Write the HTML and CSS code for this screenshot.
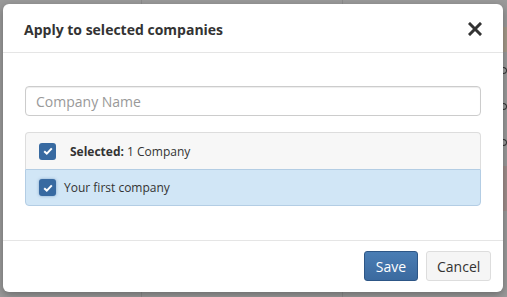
FILE: index.html
```html
<!DOCTYPE html>
<html>
<head>
<meta charset="utf-8">
<link rel="stylesheet" href="styles.css">
</head>
<body>
<div class="page">
  <div class="col col-a"></div>
  <div class="col col-b"></div>
  <div class="col col-c">
    <div class="band band-tan"></div>
    <div class="frag"><span class="arc"></span></div>
    <div class="frag"><span class="arc"></span></div>
    <div class="frag"><span class="arc"></span></div>
    <div class="band band-red"></div>
  </div>
</div>
<div class="modal">
  <div class="modal-header">
    <h4 class="modal-title">Apply to selected companies</h4>
    <button class="close" aria-label="Close">
      <svg width="14" height="14" viewBox="0 0 14 14"><path d="M2 2 L12 12 M12 2 L2 12" stroke="#333" stroke-width="3" stroke-linecap="square"/></svg>
    </button>
  </div>
  <div class="modal-body">
    <input class="search" type="text" placeholder="Company Name">
    <div class="list">
      <div class="row row-head">
        <span class="cb"><svg width="10" height="8" viewBox="0 0 10 8"><path d="M1.2 4.2 L3.8 6.6 L8.8 1.4" fill="none" stroke="#fff" stroke-width="2"/></svg></span>
        <span class="label"><b>Selected:</b> 1 Company</span>
      </div>
      <div class="row row-item">
        <span class="cb"><svg width="10" height="8" viewBox="0 0 10 8"><path d="M1.2 4.2 L3.8 6.6 L8.8 1.4" fill="none" stroke="#fff" stroke-width="2"/></svg></span>
        <span class="label">Your first company</span>
      </div>
    </div>
  </div>
  <div class="modal-footer">
    <button class="btn btn-primary">Save</button>
    <button class="btn btn-default">Cancel</button>
  </div>
</div>
</body>
</html>
```
FILE: styles.css
```css
* { box-sizing: border-box; }
html, body { margin: 0; padding: 0; }
body {
  width: 507px;
  height: 297px;
  overflow: hidden;
  background: #9a9a9a;
  font-family: "Open Sans", "Liberation Sans", sans-serif;
  color: #333;
  position: relative;
}
.page {
  display: grid;
  grid-template-columns: 142px 201px 1fr;
  height: 297px;
}
.col { border-right: 1px solid #8c8c8c; }
.col-c { border-right: none; padding-top: 27px; display: flex; flex-direction: column; align-items: flex-end; }
.band { width: 6px; }
.band-tan { height: 25px; background: #a59a8a; }
.band-red { height: 45px; background: #a08e8c; margin-top: 6px; }
.frag { width: 4px; height: 36px; display: flex; align-items: center; overflow: hidden; }
.arc { display: block; width: 8px; height: 7px; border: 1px solid #333; border-radius: 50%; margin-left: -4px; }

.modal {
  position: absolute;
  left: 3px;
  top: 4px;
  width: 500px;
  height: 288px;
  background: #fff;
  border-radius: 6px;
  box-shadow: 0 3px 9px rgba(0,0,0,0.3);
  display: flex;
  flex-direction: column;
}
.modal-header {
  height: 49px;
  border-bottom: 1px solid #e5e5e5;
  display: flex;
  align-items: center;
  justify-content: space-between;
  padding: 2px 21px 0 21px;
}
.modal-title {
  margin: 0;
  font-size: 14px;
  font-weight: 700;
  color: #333;
}
.close {
  border: none;
  background: none;
  padding: 0;
  width: 14px;
  height: 14px;
  display: flex;
  cursor: pointer;
}
.modal-body {
  flex: 1;
  padding: 33px 22px 0 22px;
}
.search {
  display: block;
  width: 100%;
  height: 30px;
  border: 1px solid #ccc;
  border-radius: 4px;
  padding: 0 10px;
  font-family: inherit;
  font-size: 14px;
  color: #555;
  box-shadow: inset 0 1px 1px rgba(0,0,0,0.075);
}
.search::placeholder { color: #999; }
.list {
  margin-top: 16px;
  border-radius: 4px;
}
.row {
  height: 37px;
  display: flex;
  align-items: center;
  font-size: 12px;
  color: #333;
}
.row-head {
  background: #f7f7f7;
  border: 1px solid #ddd;
  border-bottom: none;
  border-radius: 4px 4px 0 0;
  padding-left: 13px;
  gap: 14px;
}
.row-item {
  background: #d1e6f6;
  border: 1px solid #b3cde4;
  border-radius: 0 0 4px 4px;
  padding-left: 13px;
  gap: 8px;
}
.cb {
  width: 17px;
  height: 17px;
  border-radius: 3px;
  background: #386aa1;
  display: flex;
  align-items: center;
  justify-content: center;
}
.row-item .cb { box-shadow: 0 0 3px rgba(56,106,161,0.5); }
.modal-footer {
  height: 52px;
  border-top: 1px solid #e5e5e5;
  display: flex;
  justify-content: flex-end;
  align-items: flex-start;
  padding: 10px 12px 0 0;
  gap: 8px;
}
.btn {
  height: 30px;
  border-radius: 3px;
  font-family: inherit;
  font-size: 14px;
  padding: 0 10px;
  cursor: pointer;
}
.btn-primary {
  width: 54px;
  background: linear-gradient(#4a7db4, #3b6a9f);
  border: 1px solid #2d5686;
  color: #fff;
}
.btn-default {
  width: 65px;
  background: #f5f5f5;
  border: 1px solid #ddd;
  color: #333;
}
```
